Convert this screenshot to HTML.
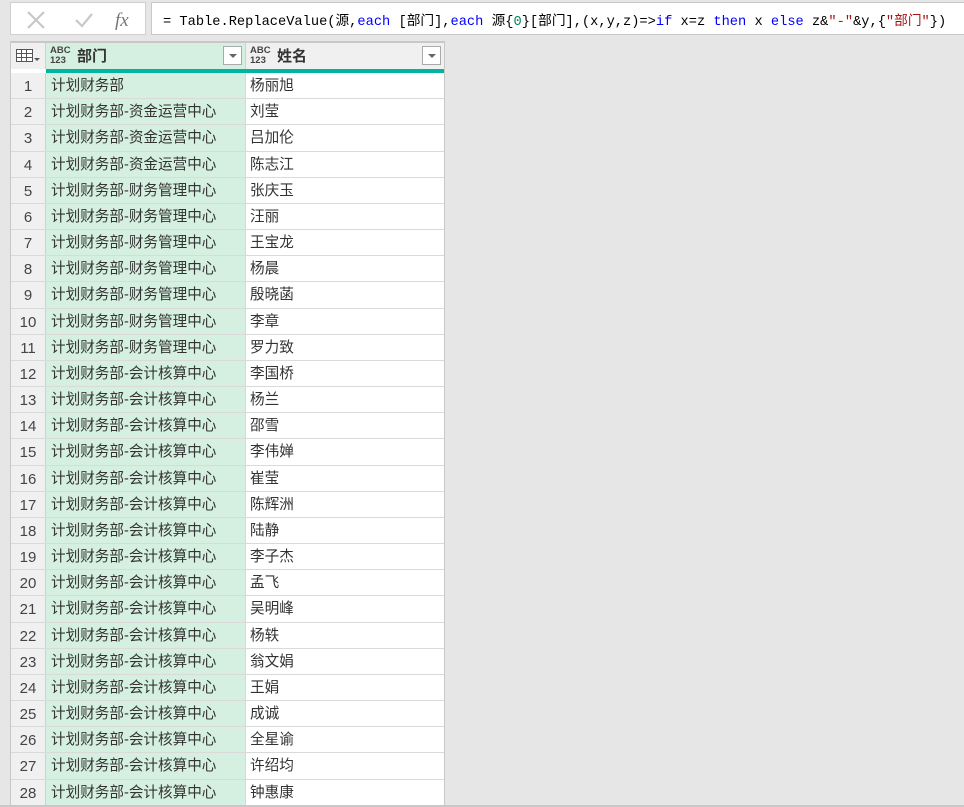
<!DOCTYPE html>
<html><head><meta charset="utf-8"><style>
*{box-sizing:border-box;margin:0;padding:0}
body{width:964px;height:807px;background:#e6e6e6;position:relative;overflow:hidden;font-family:"Liberation Sans","Microsoft YaHei","Noto Sans CJK SC",sans-serif}
.lbox{position:absolute;left:10px;top:2px;width:136px;height:33px;background:#fff;border:1px solid #d0d0d0}
.fbox{position:absolute;left:151px;top:2px;width:815px;height:33px;background:#fff;border:1px solid #c8c8c8}
.ftxt{position:absolute;left:11px;top:6px;font-family:"Liberation Mono","Noto Sans CJK SC",monospace;font-size:13.7px;color:#000;white-space:pre}
.kw{color:#0000ff}.num{color:#098658}.str{color:#a31515}
.grid{position:absolute;left:10px;top:41px;width:435px;height:765px;border:1px solid #c8c8c8;border-top:2px solid #c8c8c8;background:#fff;overflow:hidden}
.hdr{position:absolute;top:0;height:26px;background:#f0f0f0;border-right:1px solid #d0d0d0}
.teal{position:absolute;top:26px;left:35px;width:398px;height:4px;background:#00b5a0}
.abc{position:absolute;left:4px;top:3px;font-size:9.5px;line-height:9.5px;color:#444;font-weight:bold}
.hn{position:absolute;left:31px;top:2px;font-size:15px;font-weight:bold;color:#333}
.dd{position:absolute;right:3px;top:3px;width:19px;height:19px;border:1px solid #aaa;background:#fff}
.dd:after{content:"";position:absolute;left:5px;top:7px;border-left:4px solid transparent;border-right:4px solid transparent;border-top:4px solid #666}
.rows{position:absolute;top:30px;left:0;width:433px;height:733px}
.r{height:26.18px;display:flex;border-bottom:1px solid #dadada;font-size:14.6px;color:#333;line-height:27px;overflow:hidden}
.r .n{width:35px;background:#f0f0f0;border-right:1px solid #d0d0d0;text-align:center;color:#444;font-size:15px;line-height:26px;padding-top:1px}
.r .a{width:200px;background:#d5f0e1;border-right:1px solid #d8d8d8;padding-left:5px}
.r .b{flex:1;padding-left:4px}
</style></head><body>
<div class="lbox">
<svg width="136" height="33" style="position:absolute;left:0;top:0">
<path d="M17 9 L33 25 M33 9 L17 25" stroke="#c8c8c8" stroke-width="2.2" fill="none"/>
<path d="M65 17 L71 23 L81 11" stroke="#c8c8c8" stroke-width="2.2" fill="none"/>
<text x="104" y="23" font-family="Liberation Serif,serif" font-style="italic" font-size="19" fill="#777">fx</text>
</svg></div>
<div class="fbox"><div class="ftxt">= Table.ReplaceValue(源,<span class="kw">each</span> [部门],<span class="kw">each</span> 源{<span class="num">0</span>}[部门],(x,y,z)=&gt;<span class="kw">if</span> x=z <span class="kw">then</span> x <span class="kw">else</span> z&amp;<span class="str">"-"</span>&amp;y,{<span class="str">"部门"</span>})</div></div>
<div class="grid">
<div class="hdr" style="left:0;width:35px">
<svg width="35" height="26" style="position:absolute;left:0;top:0"><rect x="5.5" y="6.5" width="16" height="12" fill="#fff" stroke="#555"/><path d="M5.5 10.5H21.5M5.5 14.5H21.5M10.5 6.5V18.5M15.5 6.5V18.5" stroke="#555"/><path d="M23 15h6l-3 3z" fill="#555"/></svg>
</div>
<div class="hdr" style="left:35px;width:200px;background:#d5f0e1"><div class="abc">ABC<br>123</div><div class="hn">部门</div><div class="dd"></div></div>
<div class="hdr" style="left:235px;width:198px;border-right:none"><div class="abc">ABC<br>123</div><div class="hn">姓名</div><div class="dd"></div></div>
<div class="teal"></div>
<div class="rows">
<div class="r"><div class="n">1</div><div class="a">计划财务部</div><div class="b">杨丽旭</div></div>
<div class="r"><div class="n">2</div><div class="a">计划财务部-资金运营中心</div><div class="b">刘莹</div></div>
<div class="r"><div class="n">3</div><div class="a">计划财务部-资金运营中心</div><div class="b">吕加伦</div></div>
<div class="r"><div class="n">4</div><div class="a">计划财务部-资金运营中心</div><div class="b">陈志江</div></div>
<div class="r"><div class="n">5</div><div class="a">计划财务部-财务管理中心</div><div class="b">张庆玉</div></div>
<div class="r"><div class="n">6</div><div class="a">计划财务部-财务管理中心</div><div class="b">汪丽</div></div>
<div class="r"><div class="n">7</div><div class="a">计划财务部-财务管理中心</div><div class="b">王宝龙</div></div>
<div class="r"><div class="n">8</div><div class="a">计划财务部-财务管理中心</div><div class="b">杨晨</div></div>
<div class="r"><div class="n">9</div><div class="a">计划财务部-财务管理中心</div><div class="b">殷晓菡</div></div>
<div class="r"><div class="n">10</div><div class="a">计划财务部-财务管理中心</div><div class="b">李章</div></div>
<div class="r"><div class="n">11</div><div class="a">计划财务部-财务管理中心</div><div class="b">罗力致</div></div>
<div class="r"><div class="n">12</div><div class="a">计划财务部-会计核算中心</div><div class="b">李国桥</div></div>
<div class="r"><div class="n">13</div><div class="a">计划财务部-会计核算中心</div><div class="b">杨兰</div></div>
<div class="r"><div class="n">14</div><div class="a">计划财务部-会计核算中心</div><div class="b">邵雪</div></div>
<div class="r"><div class="n">15</div><div class="a">计划财务部-会计核算中心</div><div class="b">李伟婵</div></div>
<div class="r"><div class="n">16</div><div class="a">计划财务部-会计核算中心</div><div class="b">崔莹</div></div>
<div class="r"><div class="n">17</div><div class="a">计划财务部-会计核算中心</div><div class="b">陈辉洲</div></div>
<div class="r"><div class="n">18</div><div class="a">计划财务部-会计核算中心</div><div class="b">陆静</div></div>
<div class="r"><div class="n">19</div><div class="a">计划财务部-会计核算中心</div><div class="b">李子杰</div></div>
<div class="r"><div class="n">20</div><div class="a">计划财务部-会计核算中心</div><div class="b">孟飞</div></div>
<div class="r"><div class="n">21</div><div class="a">计划财务部-会计核算中心</div><div class="b">吴明峰</div></div>
<div class="r"><div class="n">22</div><div class="a">计划财务部-会计核算中心</div><div class="b">杨轶</div></div>
<div class="r"><div class="n">23</div><div class="a">计划财务部-会计核算中心</div><div class="b">翁文娟</div></div>
<div class="r"><div class="n">24</div><div class="a">计划财务部-会计核算中心</div><div class="b">王娟</div></div>
<div class="r"><div class="n">25</div><div class="a">计划财务部-会计核算中心</div><div class="b">成诚</div></div>
<div class="r"><div class="n">26</div><div class="a">计划财务部-会计核算中心</div><div class="b">全星谕</div></div>
<div class="r"><div class="n">27</div><div class="a">计划财务部-会计核算中心</div><div class="b">许绍均</div></div>
<div class="r"><div class="n">28</div><div class="a">计划财务部-会计核算中心</div><div class="b">钟惠康</div></div>
</div></div>
<div style="position:absolute;left:0;top:805px;width:964px;height:2px;background:#c8c8c8"></div>
</body></html>
